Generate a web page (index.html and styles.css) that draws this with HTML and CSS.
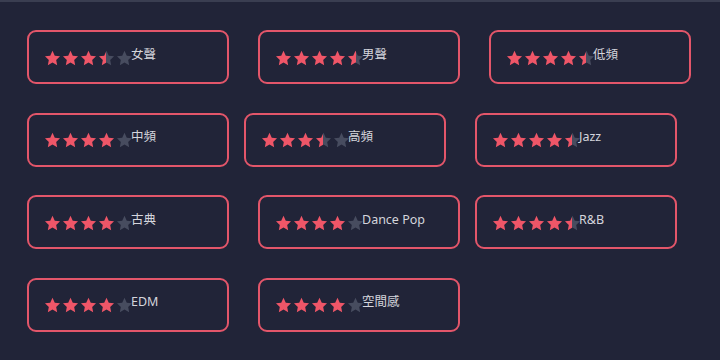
FILE: index.html
```html
<!DOCTYPE html>
<html lang="zh-Hant">
<head>
<meta charset="utf-8">
<link rel="stylesheet" href="styles.css">
</head>
<body>
<svg class="defs" width="0" height="0" aria-hidden="true">
  <defs>
    <linearGradient id="half" x1="0" x2="1" y1="0" y2="0">
      <stop offset="50%" stop-color="#ef5668"/>
      <stop offset="50%" stop-color="#474c5f"/>
    </linearGradient>
    <symbol id="star" viewBox="0 0 24 24">
      <path d="M12 1.2l3.2 6.8 7.4.9-5.4 5.1 1.4 7.4L12 17.8l-6.6 3.6 1.4-7.4-5.4-5.1 7.4-.9z"/>
    </symbol>
  </defs>
</svg>
<main class="grid">
  <div class="row">
    <div class="card"><span class="stars"><svg class="s on"><use href="#star"/></svg><svg class="s on"><use href="#star"/></svg><svg class="s on"><use href="#star"/></svg><svg class="s half"><use href="#star"/></svg><svg class="s off"><use href="#star"/></svg></span><span class="label">女聲</span></div>
    <div class="card gap-l"><span class="stars"><svg class="s on"><use href="#star"/></svg><svg class="s on"><use href="#star"/></svg><svg class="s on"><use href="#star"/></svg><svg class="s on"><use href="#star"/></svg><svg class="s half"><use href="#star"/></svg></span><span class="label">男聲</span></div>
    <div class="card gap-l"><span class="stars"><svg class="s on"><use href="#star"/></svg><svg class="s on"><use href="#star"/></svg><svg class="s on"><use href="#star"/></svg><svg class="s on"><use href="#star"/></svg><svg class="s half"><use href="#star"/></svg></span><span class="label">低頻</span></div>
  </div>
  <div class="row">
    <div class="card"><span class="stars"><svg class="s on"><use href="#star"/></svg><svg class="s on"><use href="#star"/></svg><svg class="s on"><use href="#star"/></svg><svg class="s on"><use href="#star"/></svg><svg class="s off"><use href="#star"/></svg></span><span class="label">中頻</span></div>
    <div class="card gap-s"><span class="stars"><svg class="s on"><use href="#star"/></svg><svg class="s on"><use href="#star"/></svg><svg class="s on"><use href="#star"/></svg><svg class="s half"><use href="#star"/></svg><svg class="s off"><use href="#star"/></svg></span><span class="label">高頻</span></div>
    <div class="card gap-l"><span class="stars"><svg class="s on"><use href="#star"/></svg><svg class="s on"><use href="#star"/></svg><svg class="s on"><use href="#star"/></svg><svg class="s on"><use href="#star"/></svg><svg class="s half"><use href="#star"/></svg></span><span class="label">Jazz</span></div>
  </div>
  <div class="row">
    <div class="card"><span class="stars"><svg class="s on"><use href="#star"/></svg><svg class="s on"><use href="#star"/></svg><svg class="s on"><use href="#star"/></svg><svg class="s on"><use href="#star"/></svg><svg class="s off"><use href="#star"/></svg></span><span class="label">古典</span></div>
    <div class="card gap-l"><span class="stars"><svg class="s on"><use href="#star"/></svg><svg class="s on"><use href="#star"/></svg><svg class="s on"><use href="#star"/></svg><svg class="s on"><use href="#star"/></svg><svg class="s off"><use href="#star"/></svg></span><span class="label">Dance Pop</span></div>
    <div class="card gap-s"><span class="stars"><svg class="s on"><use href="#star"/></svg><svg class="s on"><use href="#star"/></svg><svg class="s on"><use href="#star"/></svg><svg class="s on"><use href="#star"/></svg><svg class="s half"><use href="#star"/></svg></span><span class="label">R&amp;B</span></div>
  </div>
  <div class="row">
    <div class="card"><span class="stars"><svg class="s on"><use href="#star"/></svg><svg class="s on"><use href="#star"/></svg><svg class="s on"><use href="#star"/></svg><svg class="s on"><use href="#star"/></svg><svg class="s off"><use href="#star"/></svg></span><span class="label">EDM</span></div>
    <div class="card gap-l"><span class="stars"><svg class="s on"><use href="#star"/></svg><svg class="s on"><use href="#star"/></svg><svg class="s on"><use href="#star"/></svg><svg class="s on"><use href="#star"/></svg><svg class="s off"><use href="#star"/></svg></span><span class="label">空間感</span></div>
  </div>
</main>
</body>
</html>
```
FILE: styles.css
```css
html, body {
  margin: 0;
  padding: 0;
  background: #212438;
  width: 720px;
  height: 360px;
  overflow: hidden;
}
body {
  border-top: 2px solid #3a3e51;
  box-sizing: border-box;
  font-family: "Noto Sans", "Noto Sans CJK TC", sans-serif;
}
.defs {
  position: absolute;
  width: 0;
  height: 0;
}
.grid {
  display: flex;
  flex-direction: column;
  gap: 28.67px;
  padding: 28px 0 0 27px;
}
.row {
  display: flex;
}
.card {
  box-sizing: border-box;
  width: 202px;
  height: 54px;
  border: 2px solid #e3566a;
  border-radius: 9px;
  display: flex;
  align-items: center;
  padding: 2px 0 0 15px;
}
.gap-l { margin-left: 29px; }
.gap-s { margin-left: 15px; }
.stars {
  display: flex;
  gap: 1px;
}
.s {
  width: 17px;
  height: 17px;
}
.on { fill: #ef5668; }
.off { fill: #474c5f; }
.half { fill: url(#half); }
.label {
  color: #d4d5dc;
  font-size: 12.5px;
  line-height: 16px;
  margin: 0 0 7px -2px;
}
```
